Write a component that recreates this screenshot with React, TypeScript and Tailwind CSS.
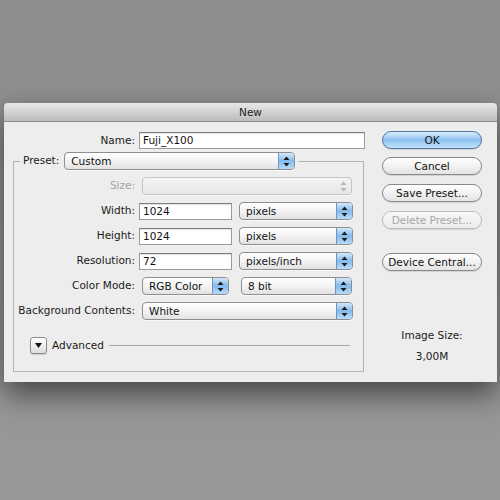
import React from 'react';

const font = { fontFamily: '"DejaVu Sans", Verdana, sans-serif' };

function Arrows({ disabled }: { disabled?: boolean }) {
  const c = disabled ? '#b5b5b5' : '#1b1b1b';
  return (
    <svg width="7" height="11" viewBox="0 0 7 11">
      <path d="M3.5 0.5 L6.5 4 L0.5 4 Z" fill={c} />
      <path d="M3.5 10.5 L6.5 7 L0.5 7 Z" fill={c} />
    </svg>
  );
}

function Select({ value, w, disabled }: { value?: string; w: string; disabled?: boolean }) {
  return (
    <div
      className={`${w} h-[18px] flex items-stretch rounded-[4px] border ${
        disabled ? 'border-[#c4c4c4] bg-gradient-to-b from-[#f4f4f4] to-[#e6e6e6]' : 'border-[#8e8e8e] bg-gradient-to-b from-white via-[#f3f3f3] to-[#e2e2e2]'
      } shadow-[0_1px_0_rgba(255,255,255,0.6)]`}
    >
      <div className="flex-1 pl-[6px] text-[10.5px] leading-[16px] text-[#111]">{value}</div>
      {disabled ? (
        <div className="w-[16px] flex items-center justify-center">
          <Arrows disabled />
        </div>
      ) : (
        <div className="w-[16px] flex items-center justify-center rounded-r-[3px] border-l border-[#6f95c0] bg-gradient-to-b from-[#d5e8fb] via-[#84baee] to-[#b9dbf9]">
          <Arrows />
        </div>
      )}
    </div>
  );
}

function Input({ value, w }: { value: string; w: string }) {
  return (
    <div className={`${w} h-[17px] border border-[#9a9a9a] border-t-[#7c7c7c] bg-white pl-[3px] text-[10.5px] leading-[15px] text-[#111] shadow-[inset_0_1px_1px_rgba(0,0,0,0.12)]`}>
      {value}
    </div>
  );
}

function Button({ label, primary, disabled, className }: { label: string; primary?: boolean; disabled?: boolean; className?: string }) {
  const look = primary
    ? 'border-[#4f77a3] bg-gradient-to-b from-[#dcedfc] via-[#8cc1f0] to-[#c4e2fb] text-[#111]'
    : disabled
    ? 'border-[#bdbdbd] bg-gradient-to-b from-[#f7f7f7] to-[#ececec] text-[#a6a6a6]'
    : 'border-[#8a8a8a] bg-gradient-to-b from-white via-[#f2f2f2] to-[#e3e3e3] text-[#111]';
  return (
    <div className={`w-[100px] h-[18px] rounded-full border ${look} text-center text-[10.5px] leading-[16px] shadow-[0_1px_1px_rgba(0,0,0,0.12)] ${className ?? ''}`}>
      {label}
    </div>
  );
}

function Row({ label, children, disabled }: { label: string; children: React.ReactNode; disabled?: boolean }) {
  return (
    <div className="flex items-center h-[18px] mt-[7px]">
      <div className={`w-[121px] text-right text-[10.5px] ${disabled ? 'text-[#a3a3a3]' : 'text-[#1a1a1a]'}`}>{label}</div>
      {children}
    </div>
  );
}

export default function App() {
  return (
    <div className="w-[500px] h-[500px] overflow-hidden bg-gradient-to-b from-[#8d8d8d] to-[#999999] pt-[103px] pl-[4px]" style={font}>
      <div className="w-[493px] h-[279px] flex flex-col shadow-[0_12px_28px_rgba(0,0,0,0.55)]">
        {/* Title bar */}
        <div className="h-[19px] shrink-0 rounded-t-[4px] border-b border-[#8b8b8b] bg-gradient-to-b from-[#e8e8e8] to-[#bcbcbc] text-center text-[10.5px] leading-[19px] text-[#1c1c1c]">
          New
        </div>

        <div className="flex-1 flex bg-[#ededed]">
          {/* Left column */}
          <div className="w-[364px] pl-[9px] pt-[10px]">
            <div className="flex items-center h-[17px]">
              <div className="w-[122px] text-right text-[10.5px] text-[#1a1a1a]">Name:</div>
              <div className="ml-[4px]">
                <Input value="Fuji_X100" w="w-[226px]" />
              </div>
            </div>

            <fieldset className="mt-[3px] w-[351px] border border-[#b3b3b3] pb-[17px]">
              <legend className="ml-[6px] px-[3px] flex items-center">
                <span className="text-[10.5px] text-[#1a1a1a] mr-[5px]">Preset:</span>
                <Select value="Custom" w="w-[231px]" />
              </legend>

              <div className="mt-[4px]">
                <Row label="Size:" disabled>
                  <div className="ml-[7px]">
                    <Select w="w-[210px]" disabled />
                  </div>
                </Row>
                <Row label="Width:">
                  <div className="ml-[4px]">
                    <Input value="1024" w="w-[93px]" />
                  </div>
                  <div className="ml-[7px]">
                    <Select value="pixels" w="w-[114px]" />
                  </div>
                </Row>
                <Row label="Height:">
                  <div className="ml-[4px]">
                    <Input value="1024" w="w-[93px]" />
                  </div>
                  <div className="ml-[7px]">
                    <Select value="pixels" w="w-[114px]" />
                  </div>
                </Row>
                <Row label="Resolution:">
                  <div className="ml-[4px]">
                    <Input value="72" w="w-[93px]" />
                  </div>
                  <div className="ml-[7px]">
                    <Select value="pixels/inch" w="w-[114px]" />
                  </div>
                </Row>
                <Row label="Color Mode:">
                  <div className="ml-[7px]">
                    <Select value="RGB Color" w="w-[87px]" />
                  </div>
                  <div className="ml-[12px]">
                    <Select value="8 bit" w="w-[111px]" />
                  </div>
                </Row>
                <Row label="Background Contents:">
                  <div className="ml-[7px]">
                    <Select value="White" w="w-[211px]" />
                  </div>
                </Row>

                {/* Advanced */}
                <div className="flex items-center mt-[17px] ml-[16px] h-[17px]">
                  <div className="w-[17px] h-[17px] rounded-[3px] border border-[#8a8a8a] bg-gradient-to-b from-white to-[#dedede] flex items-center justify-center shadow-[0_1px_1px_rgba(0,0,0,0.15)]">
                    <svg width="7" height="5" viewBox="0 0 7 5">
                      <path d="M0 0 L7 0 L3.5 5 Z" fill="#111" />
                    </svg>
                  </div>
                  <span className="ml-[5px] text-[10.5px] text-[#1a1a1a]">Advanced</span>
                  <div className="ml-[5px] w-[241px] h-px bg-[#a8a8a8]" />
                </div>
              </div>
            </fieldset>
          </div>

          {/* Right column */}
          <div className="ml-[14px] pt-[9px] flex flex-col">
            <Button label="OK" primary />
            <Button label="Cancel" className="mt-[8px]" />
            <Button label="Save Preset..." className="mt-[9px]" />
            <Button label="Delete Preset..." disabled className="mt-[9px]" />
            <Button label="Device Central..." className="mt-[24px]" />
            <div className="mt-[57px] w-[100px] text-center text-[10.5px] text-[#1a1a1a]">Image Size:</div>
            <div className="mt-[5px] w-[100px] text-center text-[10.5px] text-[#1a1a1a]">3,00M</div>
          </div>
        </div>
      </div>
    </div>
  );
}
